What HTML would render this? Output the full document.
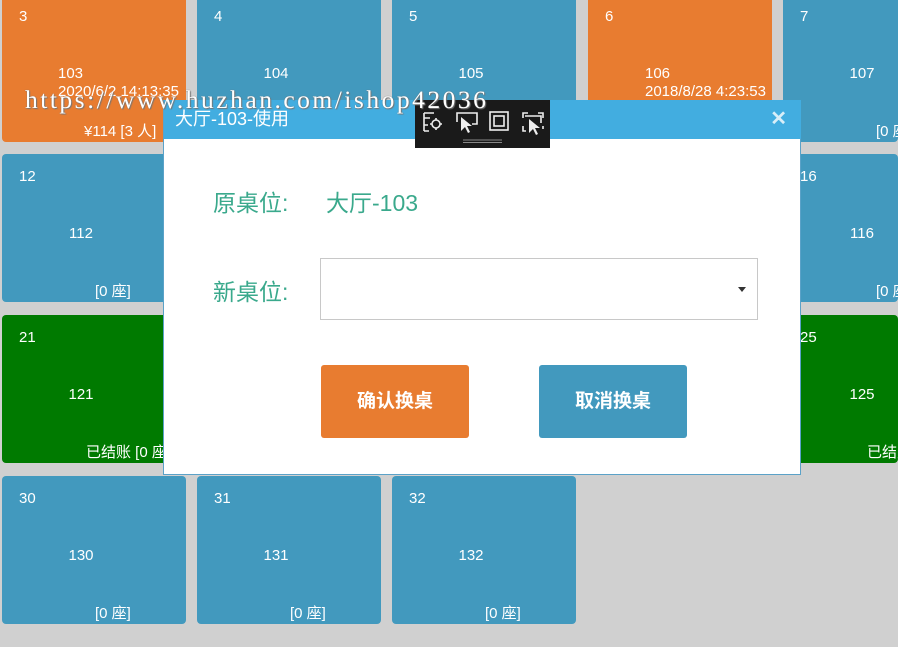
<!DOCTYPE html>
<html><head><meta charset="utf-8"><style>
*{margin:0;padding:0;box-sizing:border-box}
html,body{width:898px;height:647px;overflow:hidden}
body{background:#d0d0d0;position:relative;font-family:"Liberation Sans","Noto Sans CJK SC",sans-serif;color:#fff}
.t{position:absolute;width:184px;height:148px;border-radius:4px;overflow:hidden;font-size:15px}
.o{background:#e87c30}.b{background:#4299be}.g{background:#007a00}
.t span{position:absolute;white-space:nowrap;line-height:18px}
.n{left:17px;top:14px}
.m{left:0;width:158px;text-align:center;top:71px}
.f{top:129px}
.modal{position:absolute;left:163px;top:100px;width:638px;height:375px;background:#fff;border:1px solid #5ba2c8;border-top:none}
.hd{position:absolute;left:0;top:0;width:637px;height:39px;background:#42ade0;font-size:18px;line-height:39px;padding-left:11px}
.x{position:absolute;right:14px;top:0;font-size:20px;font-weight:bold;color:#d8eef8}
.lbl{position:absolute;font-size:23px;color:#3aa98c}
.sel{position:absolute;left:156px;top:158px;width:438px;height:62px;border:1px solid #c8c8c8}
.btn{position:absolute;top:265px;width:148px;height:73px;border-radius:3px;font-size:19px;font-weight:bold;text-align:center;line-height:73px}
.wm{position:absolute;left:25px;top:85px;font-family:"Liberation Serif",serif;font-size:25.5px;color:#fff;letter-spacing:2.5px;text-shadow:0 0 1px #666,1px 1px 1px #777;white-space:nowrap}
.tb{position:absolute;left:415px;top:100px;width:135px;height:48px;background:#1a1a1a}
</style></head><body>
<div class="t o" style="left:2px;top:-6px"><span class="n">3</span><span style="left:56px;top:71px">103</span><span style="left:56px;top:89px">2020/6/2 14:13:35</span><span class="f" style="left:82px">¥114 [3 人]</span></div>
<div class="t b" style="left:197px;top:-6px"><span class="n">4</span><span class="m">104</span></div>
<div class="t b" style="left:392px;top:-6px"><span class="n">5</span><span class="m">105</span></div>
<div class="t o" style="left:588px;top:-6px"><span class="n">6</span><span style="left:57px;top:71px">106</span><span style="left:57px;top:89px">2018/8/28 4:23:53</span></div>
<div class="t b" style="left:783px;top:-6px;width:115px"><span class="n">7</span><span class="m">107</span><span class="f" style="left:93px">[0 座]</span></div>

<div class="t b" style="left:2px;top:154px"><span class="n">12</span><span class="m">112</span><span class="f" style="left:93px">[0 座]</span></div>
<div class="t b" style="left:783px;top:154px;width:115px"><span class="n">16</span><span class="m">116</span><span class="f" style="left:93px">[0 座]</span></div>
<div class="t g" style="left:2px;top:315px"><span class="n">21</span><span class="m">121</span><span class="f" style="left:84px">已结账 [0 座]</span></div>
<div class="t g" style="left:783px;top:315px;width:115px"><span class="n">25</span><span class="m">125</span><span class="f" style="left:84px">已结账 [0 座]</span></div>

<div class="t b" style="left:2px;top:476px"><span class="n">30</span><span class="m">130</span><span class="f" style="left:93px">[0 座]</span></div>
<div class="t b" style="left:197px;top:476px"><span class="n">31</span><span class="m">131</span><span class="f" style="left:93px">[0 座]</span></div>
<div class="t b" style="left:392px;top:476px"><span class="n">32</span><span class="m">132</span><span class="f" style="left:93px">[0 座]</span></div>

<div class="modal">
<div class="hd">大厅-103-使用<span class="x">✕</span></div>
<div class="lbl" style="left:49px;top:84px">原桌位:</div>
<div class="lbl" style="left:162px;top:84px">大厅-103</div>
<div class="lbl" style="left:49px;top:173px">新桌位:</div>
<div class="sel"><div style="position:absolute;right:11px;top:28px;width:0;height:0;border-left:4px solid transparent;border-right:4px solid transparent;border-top:5px solid #333"></div></div>
<div class="btn" style="left:157px;background:#e87c30">确认换桌</div>
<div class="btn" style="left:375px;background:#4299be">取消换桌</div>
</div>

<div class="tb">
<svg width="135" height="48" viewBox="0 0 135 48" fill="none" stroke="#eee" stroke-width="1.6">
<path d="M9 13h10M9 13v18M9 18h6M9 25h4M9 31h5"/><circle cx="21" cy="24" r="4"/><path d="M21 18v2M21 28v2M15 24h2M25 24h2"/>
<path d="M42 22v-9h20v11h-5"/><path d="M46 17l0 14 4-4 3 6 2-1-3-6 5 0z" fill="#eee" stroke="none"/>
<rect x="75" y="12" width="18" height="18"/><rect x="79" y="16" width="10" height="10"/>
<path d="M108 18v-5h5M123 13h5v5M108 26v5h3M128 26v3"/><path d="M110 16h16v7"/><path d="M114 19l0 14 4-4 3 6 2-1-3-6 5 0z" fill="#eee" stroke="none"/>
<path d="M48 40h39M48 42.5h39" stroke="#888" stroke-width="1"/>
</svg>
</div>
<div class="wm">https://www.huzhan.com/ishop42036</div>
</body></html>
